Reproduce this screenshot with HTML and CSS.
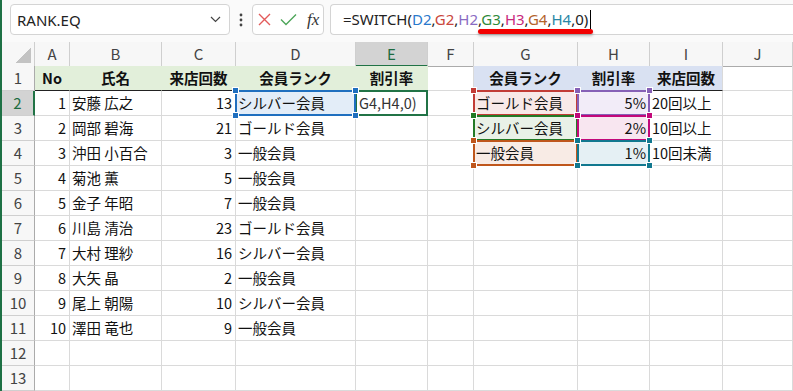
FILE: index.html
```html
<!DOCTYPE html>
<html lang="ja">

<head>
    <meta charset="utf-8">
    <meta name="viewport" content="width=device-width, initial-scale=1.0">
    <title>RANK.EQ - SWITCH</title>
    <link rel="stylesheet" href="styles.css">
</head>

<body>

    <header class="fbar">
        <div class="namebox">
            <span>RANK.EQ</span>
            <svg width="11" height="7" viewBox="0 0 11 7"><polyline points="1,1 5.5,5.5 10,1" fill="none" stroke="#444" stroke-width="1.2"/></svg>
        </div>
        <div class="grip">
            <svg width="4" height="14" viewBox="0 0 4 14"><circle cx="2" cy="2" r="1.4" fill="#444"/><circle cx="2" cy="7" r="1.4" fill="#444"/><circle cx="2" cy="12" r="1.4" fill="#444"/></svg>
        </div>
        <div class="btns">
            <svg width="13" height="13" viewBox="0 0 13 13"><path d="M1 1 L12 12 M12 1 L1 12" stroke="#e35b5b" stroke-width="1.4" fill="none"/></svg>
            <svg width="17" height="13" viewBox="0 0 17 13"><polyline points="1,6.5 6,11.5 16,1.5" stroke="#4ea65a" stroke-width="1.4" fill="none"/></svg>
            <span class="fx">fx</span>
        </div>
        <div class="formula">=SWITCH(<span class="f-blue">D2</span>,<span class="f-red">G2</span>,<span class="f-purple">H2</span>,<span class="mark"><span class="f-green">G3</span>,<span class="f-magenta">H3</span>,<span class="f-orange">G4</span>,<span class="f-teal">H4</span>,0)<span class="caret"></span></span></div>
    </header>

    <main class="sheet">
        <div class="row colh">
            <div class="corner"></div>
            <div>A</div><div>B</div><div>C</div><div>D</div><div class="sel">E</div>
            <div>F</div><div>G</div><div>H</div><div>I</div><div>J</div>
        </div>

        <div class="row">
            <div class="rh">1</div>
            <div class="hg">No</div><div class="hg">氏名</div><div class="hg">来店回数</div><div class="hg">会員ランク</div><div class="hg">割引率</div>
            <div></div>
            <div class="hb">会員ランク</div><div class="hb">割引率</div><div class="hb line">来店回数</div>
            <div></div>
        </div>

        <div class="row">
            <div class="rh sel">2</div>
            <div class="n">1</div><div>安藤 広之</div><div class="n">13</div>
            <div class="ref blue"><span>シルバー会員</span><span class="frame"><i></i><i></i><i></i><i></i></span></div>
            <div class="edit"><span>G4,H4,0)</span><span class="frame"><i></i></span></div>
            <div></div>
            <div class="ref red"><span>ゴールド会員</span><span class="frame"><i></i><i></i><i></i><i></i></span></div>
            <div class="ref purple n"><span>5%</span><span class="frame"><i></i><i></i><i></i><i></i></span></div>
            <div>20回以上</div>
            <div></div>
        </div>

        <div class="row">
            <div class="rh">3</div>
            <div class="n">2</div><div>岡部 碧海</div><div class="n">21</div><div>ゴールド会員</div><div></div>
            <div></div>
            <div class="ref green"><span>シルバー会員</span><span class="frame"><i></i><i></i><i></i><i></i></span></div>
            <div class="ref magenta n"><span>2%</span><span class="frame"><i></i><i></i><i></i><i></i></span></div>
            <div>10回以上</div>
            <div></div>
        </div>

        <div class="row">
            <div class="rh">4</div>
            <div class="n">3</div><div>沖田 小百合</div><div class="n">3</div><div>一般会員</div><div></div>
            <div></div>
            <div class="ref orange"><span>一般会員</span><span class="frame"><i></i><i></i><i></i><i></i></span></div>
            <div class="ref teal n"><span>1%</span><span class="frame"><i></i><i></i><i></i><i></i></span></div>
            <div>10回未満</div>
            <div></div>
        </div>

        <div class="row">
            <div class="rh">5</div>
            <div class="n">4</div><div>菊池 薫</div><div class="n">5</div><div>一般会員</div><div></div>
            <div></div><div></div><div></div><div></div><div></div>
        </div>

        <div class="row">
            <div class="rh">6</div>
            <div class="n">5</div><div>金子 年昭</div><div class="n">7</div><div>一般会員</div><div></div>
            <div></div><div></div><div></div><div></div><div></div>
        </div>

        <div class="row">
            <div class="rh">7</div>
            <div class="n">6</div><div>川島 清治</div><div class="n">23</div><div>ゴールド会員</div><div></div>
            <div></div><div></div><div></div><div></div><div></div>
        </div>

        <div class="row">
            <div class="rh">8</div>
            <div class="n">7</div><div>大村 理紗</div><div class="n">16</div><div>シルバー会員</div><div></div>
            <div></div><div></div><div></div><div></div><div></div>
        </div>

        <div class="row">
            <div class="rh">9</div>
            <div class="n">8</div><div>大矢 晶</div><div class="n">2</div><div>一般会員</div><div></div>
            <div></div><div></div><div></div><div></div><div></div>
        </div>

        <div class="row">
            <div class="rh">10</div>
            <div class="n">9</div><div>尾上 朝陽</div><div class="n">10</div><div>シルバー会員</div><div></div>
            <div></div><div></div><div></div><div></div><div></div>
        </div>

        <div class="row">
            <div class="rh">11</div>
            <div class="n">10</div><div>澤田 竜也</div><div class="n">9</div><div>一般会員</div><div></div>
            <div></div><div></div><div></div><div></div><div></div>
        </div>

        <div class="row">
            <div class="rh">12</div>
            <div></div><div></div><div></div><div></div><div></div>
            <div></div><div></div><div></div><div></div><div></div>
        </div>

        <div class="row">
            <div class="rh">13</div>
            <div></div><div></div><div></div><div></div><div></div>
            <div></div><div></div><div></div><div></div><div></div>
        </div>
    </main>

</body>

</html>
```

FILE: styles.css
```css
* {
    box-sizing: border-box;
}

body {
    margin: 0;
    width: 793px;
    height: 391px;
    overflow: hidden;
    background-color: #fff;
    border-left: 2px solid #1e7145;
    font-family: "Noto Sans CJK JP", "Noto Sans", sans-serif;
    color: #111;
}

/* formula bar */

.fbar {
    display: flex;
    align-items: center;
    height: 42px;
    padding: 4px 0 7px 8px;
    background-color: #fafafa;
    font-family: "Noto Sans", sans-serif;
    font-size: 15px;
}

.namebox {
    width: 220px;
    height: 31px;
    display: flex;
    align-items: center;
    justify-content: space-between;
    padding: 0 8px 0 6px;
    background-color: #fff;
    border: 1px solid #d4d4d4;
    border-radius: 4px;
    color: #222;
}

.grip {
    width: 22px;
    display: flex;
    justify-content: center;
}

.btns {
    width: 72px;
    height: 31px;
    display: flex;
    align-items: center;
    padding-left: 5px;
    background-color: #fff;
    border: 1px solid #d4d4d4;
    border-radius: 4px;
}

.btns svg:nth-child(2) {
    margin-left: 9px;
}

.fx {
    margin-left: 10px;
    font-family: "Liberation Serif", serif;
    font-style: italic;
    font-size: 17px;
    color: #333;
}

.formula {
    flex: 1;
    height: 31px;
    margin-left: 6px;
    padding-left: 12px;
    line-height: 29px;
    white-space: nowrap;
    background-color: #fff;
    border: 1px solid #d4d4d4;
    border-right: none;
    border-radius: 4px 0 0 4px;
    color: #222;
}

.f-blue { color: #2a79cc; }
.f-red { color: #c9463c; }
.f-purple { color: #8a6cc2; }
.f-green { color: #2f8a3a; }
.f-magenta { color: #c82a7c; }
.f-orange { color: #b3632b; }
.f-teal { color: #2a86a6; }

.mark {
    position: relative;
}

.mark::after {
    content: "";
    position: absolute;
    left: -3px;
    right: -2px;
    bottom: -5px;
    height: 5px;
    border-radius: 3px;
    background-color: #f20000;
    box-shadow: 0 2px 3px rgba(0, 0, 0, 0.25);
}

.caret {
    display: inline-block;
    width: 1px;
    height: 19px;
    margin-left: 2px;
    vertical-align: -4px;
    background-color: #000;
}

/* grid */

.row {
    display: grid;
    grid-template-columns: 33px 35px 92px 74px 120px 72px 46px 104px 72px 73px 70px;
    height: 25px;
}

.row > div {
    border-right: 1px solid #dadada;
    border-bottom: 1px solid #dadada;
    padding: 0 2px;
    line-height: 24px;
    font-size: 14.5px;
    white-space: nowrap;
}

.colh {
    height: 24px;
}

.colh > div {
    background-color: #f7f7f7;
    border-right-color: #cfcfcf;
    border-bottom-color: #ababab;
    text-align: center;
    line-height: 23px;
    font-size: 15px;
    color: #444;
}

.colh .corner {
    background-image: linear-gradient(to bottom right, transparent 50%, #c3c3c3 50%);
    background-size: 16px 16px;
    background-position: right 3px bottom 3px;
    background-repeat: no-repeat;
}

.row > .rh {
    background-color: #f7f7f7;
    border-right-color: #ababab;
    border-bottom-color: #cfcfcf;
    text-align: center;
    font-size: 15px;
    color: #444;
}

.row > .sel {
    background-color: #d3d3d3;
    color: #1d6b40;
}

.colh > .sel {
    border-bottom: 2px solid #217346;
}

.row > .rh.sel {
    border-right: 2px solid #217346;
}

.row > .n {
    text-align: right;
    padding-right: 3px;
}

.row > .hg,
.row > .hb {
    text-align: center;
    font-weight: bold;
    border-bottom-color: #222;
}

.row > .hg {
    background-color: #e2efda;
    border-right-color: #e2efda;
}

.row > .hb {
    background-color: #d9e1f2;
    border-right-color: #d9e1f2;
}

.row > .hb.line {
    border-right-color: #dadada;
}

/* reference highlights */

.ref,
.edit {
    position: relative;
}

.frame {
    position: absolute;
    top: -1px;
    left: -1px;
    right: -1px;
    bottom: -1px;
    border: 2px solid var(--c);
}

.frame i {
    position: absolute;
    width: 7px;
    height: 7px;
    background-color: var(--c);
    border: 1px solid #fff;
}

.frame i:nth-child(1) { top: -5px; left: -5px; }
.frame i:nth-child(2) { top: -5px; right: -5px; }
.frame i:nth-child(3) { bottom: -5px; left: -5px; }
.frame i:nth-child(4) { bottom: -5px; right: -5px; }

.row > .blue { --c: #1f6fbf; background-color: #e3edf8; border-color: #e3edf8; }
.row > .red { --c: #c23c36; background-color: #f8e9e8; border-color: #f8e9e8; }
.row > .purple { --c: #8660b6; background-color: #f2ecf8; border-color: #f2ecf8; }
.row > .green { --c: #237a25; background-color: #e9f1e7; border-color: #e9f1e7; }
.row > .magenta { --c: #c2087a; background-color: #f8e6f0; border-color: #f8e6f0; }
.row > .orange { --c: #bf561c; background-color: #f8ebe5; border-color: #f8ebe5; }
.row > .teal { --c: #11788f; background-color: #e5f0f4; border-color: #e5f0f4; }

.blue .frame {
    z-index: 2;
}

.edit .frame {
    --c: #217346;
    z-index: 1;
}

.edit .frame i {
    bottom: -5px;
    right: -5px;
}

.edit span:first-child {
    padding-left: 1px;
    color: #333;
}
```
